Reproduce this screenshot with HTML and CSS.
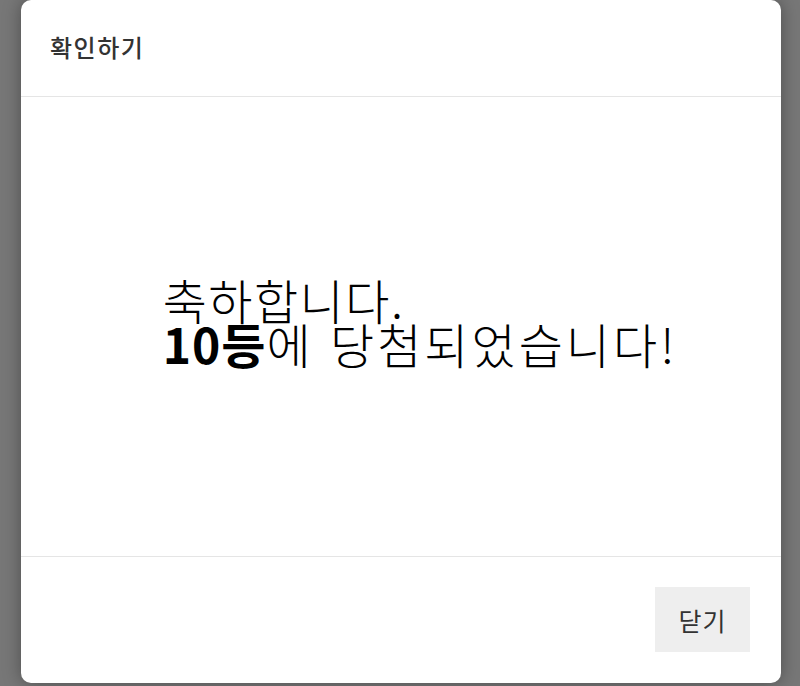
FILE: index.html
```html
<!DOCTYPE html>
<html lang="ko">
<head>
<meta charset="utf-8">
<link rel="stylesheet" href="styles.css">
</head>
<body>
<div class="page">
  <div class="modal">
    <div class="modal-header">확인하기</div>
    <div class="modal-body">
      <p class="message"><span class="line1">축하합니다.</span><br><b>10등</b>에 당첨되었습니다!</p>
    </div>
    <div class="modal-footer">
      <button class="close-btn">닫기</button>
    </div>
  </div>
</div>
</body>
</html>
```
FILE: styles.css
```css
html, body {
  margin: 0;
  padding: 0;
  height: 100%;
  overflow: hidden;
}
body {
  background: #777777;
  font-family: "Noto Sans CJK KR", "Noto Sans", sans-serif;
}
.page {
  padding-left: 21px;
}
.modal {
  width: 760px;
  height: 683px;
  background: #fff;
  border-radius: 10px;
  box-shadow: 0 0 18px rgba(0, 0, 0, 0.35);
  display: flex;
  flex-direction: column;
}
.modal-header {
  height: 97px;
  box-sizing: border-box;
  border-bottom: 1px solid #e5e5e5;
  padding-left: 29px;
  padding-bottom: 4px;
  display: flex;
  align-items: center;
  font-size: 24px;
  letter-spacing: 1.5px;
  font-weight: 500;
  color: #333;
}
.modal-body {
  flex: 1;
  display: flex;
  align-items: center;
  justify-content: center;
  padding-left: 38px;
  padding-bottom: 12px;
  border-bottom: 1px solid #e5e5e5;
}
.message {
  margin: 0;
  font-size: 48px;
  line-height: 44px;
  letter-spacing: 3px;
  color: #000;
  font-weight: 300;
}
.line1 {
  letter-spacing: 1.5px;
}
.message b {
  font-weight: 700;
  letter-spacing: 1px;
}
.modal-footer {
  height: 126px;
  box-sizing: border-box;
  display: flex;
  justify-content: flex-end;
  padding: 30px 31px 0 0;
  align-items: flex-start;
}
.close-btn {
  width: 95px;
  height: 65px;
  border: none;
  background: #eeeeee;
  font-family: "Noto Sans CJK KR", "Noto Sans", sans-serif;
  font-size: 25px;
  letter-spacing: 1px;
  color: #333;
  padding: 0;
}
```
